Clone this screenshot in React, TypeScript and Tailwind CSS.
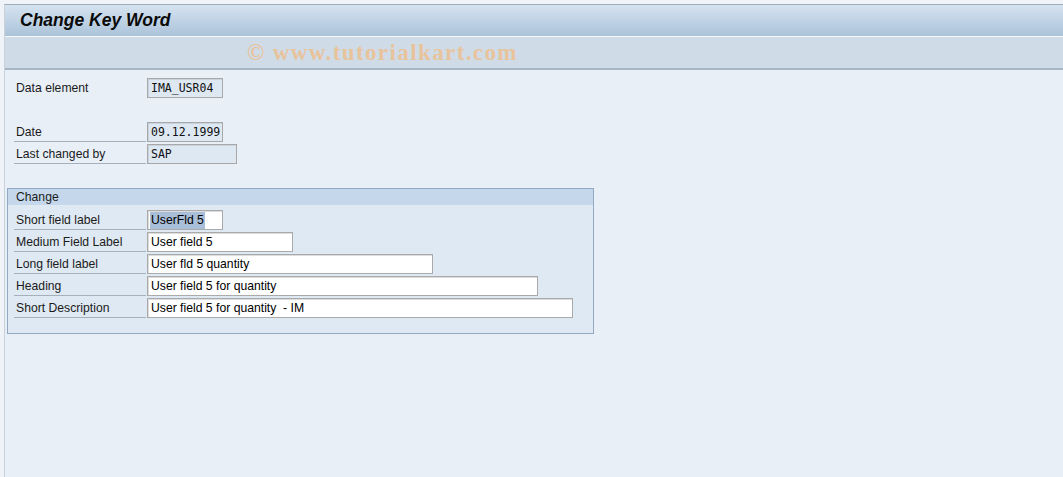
import React from "react";

const Label = ({ text, line = true }: { text: string; line?: boolean }) => (
  <div
    className={`w-[132px] h-[22px] flex items-center pt-[3px] pl-[2px] text-[12.2px] text-[#1b1b1b] ${
      line ? "border-b border-[#a5b0bc]" : ""
    }`}
  >
    {text}
  </div>
);

const MonoBox = ({ value, w }: { value: string; w: string }) => (
  <div
    className={`${w} ml-[1px] mt-[2px] h-[20px] border border-[#a8a8a8] shadow-[inset_1px_1px_0_#c9d3de] bg-[#dde8f3] flex items-center pt-[1px] pl-[3px] font-['DejaVu_Sans_Mono',monospace] text-[11.5px] text-[#111]`}
  >
    {value}
  </div>
);

const EditBox = ({ children, w }: { children: React.ReactNode; w: string }) => (
  <div
    className={`${w} ml-[1px] mt-[2px] h-[20px] border border-[#aaaaaa] shadow-[inset_1px_1px_0_#dcdcdc] bg-white flex items-center pt-[1px] pl-[2px] text-[12.2px] text-[#000]`}
  >
    {children}
  </div>
);

const Row = ({ children }: { children: React.ReactNode }) => (
  <div className="flex h-[22px]">{children}</div>
);

export default function App() {
  const rows: { label: string; value: React.ReactNode; w: string }[] = [
    {
      label: "Short field label",
      value: <span className="bg-[#a9bed8] px-[1px] leading-[17px]">UserFld 5</span>,
      w: "w-[76px]",
    },
    { label: "Medium Field Label", value: <span className="pl-[1px]">User field 5</span>, w: "w-[146px]" },
    { label: "Long field label", value: <span className="pl-[1px]">User fld 5 quantity</span>, w: "w-[286px]" },
    { label: "Heading", value: <span className="pl-[1px]">User field 5 for quantity</span>, w: "w-[391px]" },
    {
      label: "Short Description",
      value: <span className="pl-[1px] whitespace-pre">User field 5 for quantity  - IM</span>,
      w: "w-[426px]",
    },
  ];

  return (
    <div className="w-[1063px] h-[477px] bg-[#f0f3f7] pt-[4px] overflow-hidden font-['Liberation_Sans',Arial,sans-serif]">
      <div className="ml-[4px] h-[473px] border-l border-t border-t-[#9eabbb] border-l-[#c9d1db] flex flex-col bg-[#e8eff7]">
        {/* title bar */}
        <div className="h-[31px] bg-gradient-to-b from-[#d6e3f0] to-[#abc3da] flex items-center pl-[15px]">
          <span className="text-[17.5px] font-bold italic text-[#0a0a0a]">Change Key Word</span>
        </div>
        <div className="h-[1px] bg-[#f4f8fb]" />
        {/* toolbar */}
        <div className="h-[33px] bg-[#cfdce8] border-b-2 border-[#a7b6c6] flex items-center pl-[242px]">
          <span className="font-['Liberation_Serif',serif] font-bold text-[23px] tracking-[1.4px] text-[#e8c39b] leading-none">
            © www.tutorialkart.com
          </span>
        </div>
        {/* body */}
        <div className="flex-1 pt-[6px] px-[2px]">
          <div className="ml-[7px]">
            <Row>
              <Label text="Data element" line={false} />
              <MonoBox value="IMA_USR04" w="w-[76px]" />
            </Row>
            <div className="h-[22px]" />
            <Row>
              <Label text="Date" />
              <MonoBox value="09.12.1999" w="w-[76px]" />
            </Row>
            <Row>
              <Label text="Last changed by" />
              <MonoBox value="SAP" w="w-[90px]" />
            </Row>
          </div>

          <div className="mt-[24px] w-[587px] border border-[#93a9c3] bg-[#dfe9f3]">
            <div className="h-[16px] bg-[#c5d8eb] flex items-center pl-[8px] pt-[1px] text-[12.2px] text-[#1b1b1b]">
              Change
            </div>
            <div className="pt-[3px] pb-[15px] pl-[6px]">
              {rows.map((r) => (
                <Row key={r.label}>
                  <Label text={r.label} />
                  <EditBox w={r.w}>{r.value}</EditBox>
                </Row>
              ))}
            </div>
          </div>
        </div>
      </div>
    </div>
  );
}
